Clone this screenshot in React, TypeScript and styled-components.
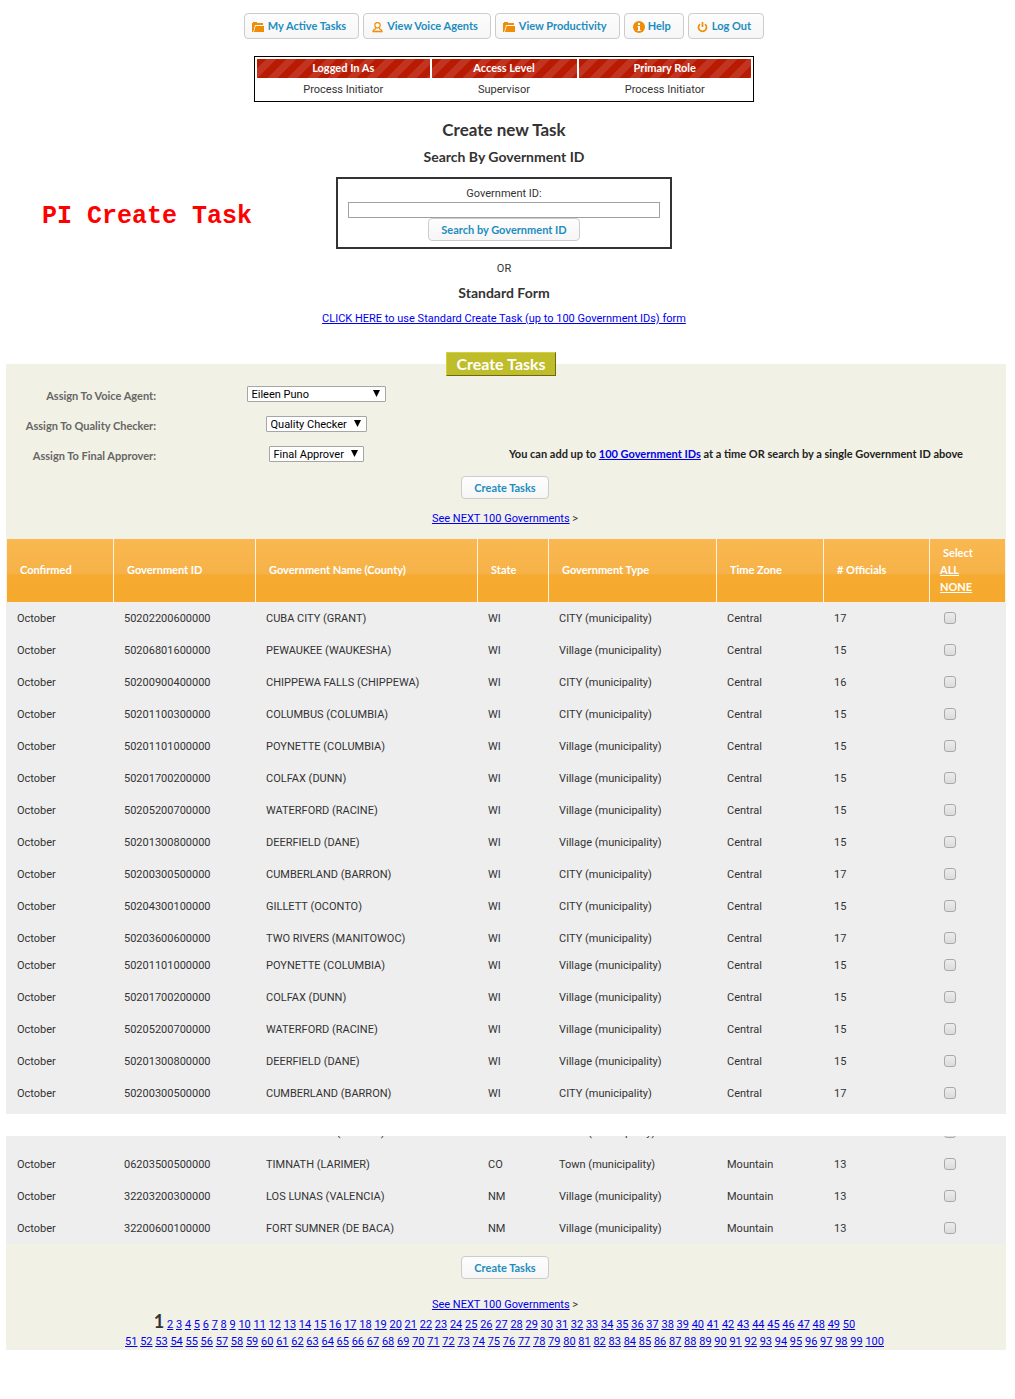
import React, { useState } from 'react';
import styled, { createGlobalStyle, css } from 'styled-components';

const body = 'Roboto, "Liberation Sans", sans-serif';
const strong = 'Lato, "Liberation Sans", sans-serif';

const GlobalStyle = createGlobalStyle`
  *, *::before, *::after { box-sizing: border-box; }
  body {
    margin: 0;
    background: #fff;
    color: #333;
    font: 11px/17px ${body};
  }
  a { color: #0000ee; }
`;

const Page = styled.main`
  padding-top: 13px;
`;

const Intro = styled.div`
  position: relative;
  display: flex;
  flex-direction: column;
  align-items: center;
  padding-right: 7px;
`;

const buttonFace = css`
  border: 1px solid #ccc;
  border-radius: 4px;
  background: linear-gradient(#fdfdfd, #f6f6f6);
  color: #1c8dc0;
  font: 700 11px/17px ${strong};
  cursor: pointer;
`;

const Toolbar = styled.nav`
  display: flex;
  gap: 4px;
`;

const ToolButton = styled.button`
  ${buttonFace}
  display: flex;
  align-items: center;
  gap: 3px;
  height: 26px;
  padding: 0 12px 2px 6px;
`;

const ActionButton = styled.button`
  ${buttonFace}
  height: 23px;
  padding: 0 12px 1px;
`;

const Glyph = styled.svg`
  width: 14px;
  height: 14px;
  margin-top: 3px;
`;

const Status = styled.table`
  width: 500px;
  max-width: 100%;
  margin-top: 17px;
  border: 1px solid #000;
  border-spacing: 2px;
  table-layout: fixed;
  text-align: center;

  th, td { height: 19px; padding: 0; }
  th {
    padding-bottom: 2px;
    background: repeating-linear-gradient(135deg, #b81a02 0 7px, #c23420 7px 14px);
    color: #fff;
    font: 700 11px/17px ${strong};
  }
  th:nth-child(2) { width: 145px; }
`;

const Title = styled.h1`
  margin: 18px 0 0;
  font: 700 17px/20px ${strong};
`;

const Subtitle = styled.h2<{ $gap: number }>`
  margin: ${p => p.$gap}px 0 0;
  font: 700 14px/18px ${strong};
`;

const SearchBox = styled.form`
  display: flex;
  flex-direction: column;
  align-items: center;
  width: 336px;
  margin-top: 11px;
  padding: 6px 10px;
  border: 2px solid #333;
`;

const SearchInput = styled.input`
  width: 100%;
  height: 16px;
  padding: 0 3px;
  border: 1px solid #a0a0a0;
  font: 11px/14px ${body};
`;

const Line = styled.p<{ $gap: number }>`
  margin: ${p => p.$gap}px 0 0;
`;

const Annotation = styled.p`
  position: absolute;
  top: 190px;
  left: 42px;
  margin: 0;
  color: #f00;
  font: 700 25px/28px "Liberation Mono", monospace;
`;

const TaskPanel = styled.fieldset`
  min-width: 0;
  margin: 25px 9px 0 6px;
  padding: 4px 0 0;
  border: 0;
  background: #f2f1e5;
`;

const Legend = styled.legend`
  height: 24px;
  margin: 0 auto;
  padding: 0 9px;
  position: relative;
  right: 5px;
  border: 1px solid;
  border-color: #d4d23c #6b6a10 #6b6a10 #d4d23c;
  background: #bfbd2b;
  color: #fff;
  font: 700 16px/21px ${strong};
`;

const Assignments = styled.div`
  display: grid;
  grid-template-columns: 16% 30% 54%;
  grid-auto-rows: 30px;
  align-items: center;
  justify-items: center;
`;

const AssignLabel = styled.label`
  grid-column: 1;
  justify-self: end;
  padding-right: 10px;
  color: #666;
  font: 700 11px/17px ${strong};
`;

const SelectFrame = styled.span`
  position: relative;
  display: flex;
  margin-bottom: 2px;
`;

const Select = styled.select<{ $wide?: boolean }>`
  appearance: none;
  width: ${p => (p.$wide ? '139px' : 'auto')};
  height: 16px;
  padding: 1px 18px 0 4px;
  border: 1px solid #a6a6a6;
  border-radius: 1px;
  background: #fff;
  color: #000;
  font: 11px/13px ${body};
`;

const Arrow = styled.svg`
  position: absolute;
  top: 4px;
  right: 6px;
  width: 7px;
  height: 7px;
  pointer-events: none;
`;

const Hint = styled.p`
  margin: 0 0 4px;
  color: #222;
  font: 700 11px/17px ${strong};
`;

const Actions = styled.div<{ $top: number; $between: number; $bottom: number }>`
  display: flex;
  flex-direction: column;
  align-items: center;
  gap: ${p => p.$between}px;
  padding: ${p => p.$top}px 2px ${p => p.$bottom}px 0;
`;

const TableArea = styled.div`
  padding-bottom: 5px;
  background: #eee;
`;

const Grid = styled.table`
  width: 100%;
  border-collapse: separate;
  border-spacing: 0;
  table-layout: fixed;
`;

const Head = styled.th`
  height: 63px;
  padding: 0 0 2px 13px;
  border-left: 1px solid #fdf3e0;
  background: linear-gradient(#f9b850, #f6b248 55%, #f6aa30 57%, #f5a92d);
  color: #fff;
  font: 700 11px/17px ${strong};
  text-align: left;

  &:last-child {
    padding-left: 10px;
    border-right: 1px solid #fdf3e0;
  }
`;

const HeadLink = styled.a`
  display: block;
  width: max-content;
  color: #fff;
`;

const HeadText = styled.span`
  padding-left: 3px;
`;

const Row = styled.tr<{ $short?: boolean }>`
  height: ${p => (p.$short ? 27 : 32)}px;

  td {
    height: inherit;
    padding: 0 0 ${p => (p.$short ? 5 : 0)}px 11px;
    vertical-align: middle;
  }
`;

const Check = styled.input`
  appearance: none;
  display: block;
  width: 12px;
  height: 12px;
  margin: 0 4px;
  border: 1px solid #a9a9a9;
  border-radius: 3px;
  background: linear-gradient(#ececec, #dcdcdc);

  &:checked { background: #777; }
`;

const Continued = styled.section`
  margin: 22px 9px 49px 6px;
  background: #f2f1e5;
`;

const Scrolled = styled.div`
  overflow: hidden;
  background: #eee;

  ${Grid} { margin-top: -20px; }
`;

const Pages = styled.nav`
  display: flex;
  flex-direction: column;
  align-items: center;
  padding-right: 3px;
`;

const PageLine = styled.div`
  height: 17px;
`;

const Current = styled.strong`
  font: 700 18px/0 ${strong};
`;

function Icon({ kind }: { kind: string }) {
  const o = '#ef8c08';
  return (
    <Glyph viewBox="0 0 14 14" aria-hidden="true">
      {kind === 'folder' && (
        <g fill={o}>
          <path d="M1 12V3h1V2h4v1h6v2H4L2.200 12z" />
          <path d="M4.600 6H13V12H3z" />
        </g>
      )}
      {kind === 'user' && (
        <g fill="none" stroke={o} strokeWidth="1.100">
          <circle cx="7.500" cy="5.300" r="2.700" />
          <path d="M6 7.800 5.300 9 3.300 10V11.500H11.700V10L9.700 9 9 7.800" />
          <path d="M2.500 11.500H12.500" strokeWidth="1.600" />
        </g>
      )}
      {kind === 'info' && (
        <g>
          <circle cx="8" cy="7" r="6" fill={o} />
          <path d="M7 3h2v2H7zM6.500 6H9v4h.7v1H6.400v-1h.7V7h-.6z" fill="#fff" />
        </g>
      )}
      {kind === 'power' && (
        <g fill="none" stroke={o} strokeWidth="1.700">
          <path d="M5 4.200A4 4 0 1 0 10 4.200" />
          <path d="M7.500 2V7" />
        </g>
      )}
    </Glyph>
  );
}

const tools = [
  ['folder', 'My Active Tasks'],
  ['user', 'View Voice Agents'],
  ['folder', 'View Productivity'],
  ['info', 'Help'],
  ['power', 'Log Out'],
];

const agents = [
  { id: 'voice', label: 'Assign To Voice Agent:', value: 'Eileen Puno', wide: true },
  { id: 'quality', label: 'Assign To Quality Checker:', value: 'Quality Checker', wide: false },
  { id: 'final', label: 'Assign To Final Approver:', value: 'Final Approver', wide: false },
];

type Gov = [string, string, string, string, string, string, string];
const wi = (id: string, name: string, type: string, n: string): Gov => ['October', id, name, 'WI', `${type} (municipality)`, 'Central', n];

const poynette = wi('50201101000000', 'POYNETTE (COLUMBIA)', 'Village', '15');
const colfax = wi('50201700200000', 'COLFAX (DUNN)', 'Village', '15');
const waterford = wi('50205200700000', 'WATERFORD (RACINE)', 'Village', '15');
const deerfield = wi('50201300800000', 'DEERFIELD (DANE)', 'Village', '15');
const cumberland = wi('50200300500000', 'CUMBERLAND (BARRON)', 'CITY', '17');

const firstRows: Gov[] = [
  wi('50202200600000', 'CUBA CITY (GRANT)', 'CITY', '17'),
  wi('50206801600000', 'PEWAUKEE (WAUKESHA)', 'Village', '15'),
  wi('50200900400000', 'CHIPPEWA FALLS (CHIPPEWA)', 'CITY', '16'),
  wi('50201100300000', 'COLUMBUS (COLUMBIA)', 'CITY', '15'),
  poynette, colfax, waterford, deerfield, cumberland,
  wi('50204300100000', 'GILLETT (OCONTO)', 'CITY', '15'),
  wi('50203600600000', 'TWO RIVERS (MANITOWOC)', 'CITY', '17'),
];
const repeatedRows: Gov[] = [poynette, colfax, waterford, deerfield, cumberland];
const lastRows: Gov[] = [
  ['', '', 'WELLINGTON (PUEBLO)', '', 'Town (municipality)', '', ''],
  ['October', '06203500500000', 'TIMNATH (LARIMER)', 'CO', 'Town (municipality)', 'Mountain', '13'],
  ['October', '32203200300000', 'LOS LUNAS (VALENCIA)', 'NM', 'Village (municipality)', 'Mountain', '13'],
  ['October', '32200600100000', 'FORT SUMNER (DE BACA)', 'NM', 'Village (municipality)', 'Mountain', '13'],
];

const Col = styled.col<{ $w?: number }>`
  width: ${p => (p.$w ? `${p.$w}px` : 'auto')};
`;

function Columns() {
  return (
    <colgroup>
      {[107, 142, 0, 71, 168, 107, 106, 77].map((w, i) => <Col key={i} $w={w} />)}
    </colgroup>
  );
}

function GovRow({ gov, checked, onToggle, short }: { gov: Gov; checked: boolean; onToggle: () => void; short?: boolean }) {
  return (
    <Row $short={short}>
      {gov.map((v, i) => <td key={i}>{v}</td>)}
      <td><Check type="checkbox" aria-label={`Select ${gov[2]}`} checked={checked} onChange={onToggle} /></td>
    </Row>
  );
}

const range = (a: number, b: number) => Array.from({ length: b - a + 1 }, (_, i) => a + i);

function PageLinks({ from, to }: { from: number; to: number }) {
  return <>{range(from, to).map(n => <React.Fragment key={n}><a href={`#page-${n}`}>{n}</a>{' '}</React.Fragment>)}</>;
}

function NextLink() {
  return <span><a href="#next">See NEXT 100 Governments</a> &gt;</span>;
}

export default function App() {
  const total = firstRows.length + repeatedRows.length + lastRows.length;
  const [picked, setPicked] = useState<boolean[]>(Array(total).fill(false));
  const setAll = (v: boolean) => (e: React.MouseEvent) => { e.preventDefault(); setPicked(Array(total).fill(v)); };
  const row = (gov: Gov, n: number, short = false) => (
    <GovRow key={n} gov={gov} short={short} checked={picked[n]} onToggle={() => setPicked(p => p.map((v, i) => (i === n ? !v : v)))} />
  );

  return (
    <Page>
      <GlobalStyle />
      <Intro>
        <Toolbar>
          {tools.map(([kind, text]) => <ToolButton key={text} type="button"><Icon kind={kind} />{text}</ToolButton>)}
        </Toolbar>
        <Status>
          <thead><tr><th>Logged In As</th><th>Access Level</th><th>Primary Role</th></tr></thead>
          <tbody><tr><td>Process Initiator</td><td>Supervisor</td><td>Process Initiator</td></tr></tbody>
        </Status>
        <Title>Create new Task</Title>
        <Subtitle $gap={8}>Search By Government ID</Subtitle>
        <SearchBox onSubmit={e => e.preventDefault()}>
          <label htmlFor="gov-id">Government ID:</label>
          <SearchInput id="gov-id" type="text" />
          <ActionButton type="submit">Search by Government ID</ActionButton>
        </SearchBox>
        <Line $gap={11}>OR</Line>
        <Subtitle $gap={7}>Standard Form</Subtitle>
        <Line $gap={8}><a href="#standard">CLICK HERE to use Standard Create Task (up to 100 Government IDs) form</a></Line>
        <Annotation>PI Create Task</Annotation>
      </Intro>

      <form onSubmit={e => e.preventDefault()}>
        <TaskPanel>
          <Legend>Create Tasks</Legend>
          <Assignments>
            {agents.map(a => (
              <React.Fragment key={a.id}>
                <AssignLabel htmlFor={a.id}>{a.label}</AssignLabel>
                <SelectFrame>
                  <Select id={a.id} $wide={a.wide}><option>{a.value}</option></Select>
                  <Arrow viewBox="0 0 7 7" aria-hidden="true"><path d="M0 0h7L3.500 7z" fill="#000" /></Arrow>
                </SelectFrame>
              </React.Fragment>
            ))}
            <Hint>You can add up to <a href="#ids">100 Government IDs</a> at a time OR search by a single Government ID above</Hint>
          </Assignments>
          <Actions $top={6} $between={11} $bottom={12}>
            <ActionButton type="submit">Create Tasks</ActionButton>
            <NextLink />
          </Actions>
          <TableArea>
            <Grid>
              <Columns />
              <thead>
                <tr>
                  {['Confirmed', 'Government ID', 'Government Name (County)', 'State', 'Government Type', 'Time Zone', '# Officials'].map(h => <Head key={h}>{h}</Head>)}
                  <Head>
                    <HeadText>Select</HeadText>
                    <HeadLink href="#all" onClick={setAll(true)}>ALL</HeadLink>
                    <HeadLink href="#none" onClick={setAll(false)}>NONE</HeadLink>
                  </Head>
                </tr>
              </thead>
              <tbody>{firstRows.map((g, i) => row(g, i))}</tbody>
              <tbody>{repeatedRows.map((g, i) => row(g, firstRows.length + i, i === 0))}</tbody>
            </Grid>
          </TableArea>
        </TaskPanel>

        <Continued>
          <Scrolled>
            <Grid>
              <Columns />
              <tbody>{lastRows.map((g, i) => row(g, firstRows.length + repeatedRows.length + i))}</tbody>
            </Grid>
          </Scrolled>
          <Actions $top={12} $between={17} $bottom={3}>
            <ActionButton type="submit">Create Tasks</ActionButton>
            <NextLink />
          </Actions>
          <Pages aria-label="Pages">
            <PageLine><Current>1</Current> <PageLinks from={2} to={50} /></PageLine>
            <PageLine><PageLinks from={51} to={100} /></PageLine>
          </Pages>
        </Continued>
      </form>
    </Page>
  );
}
